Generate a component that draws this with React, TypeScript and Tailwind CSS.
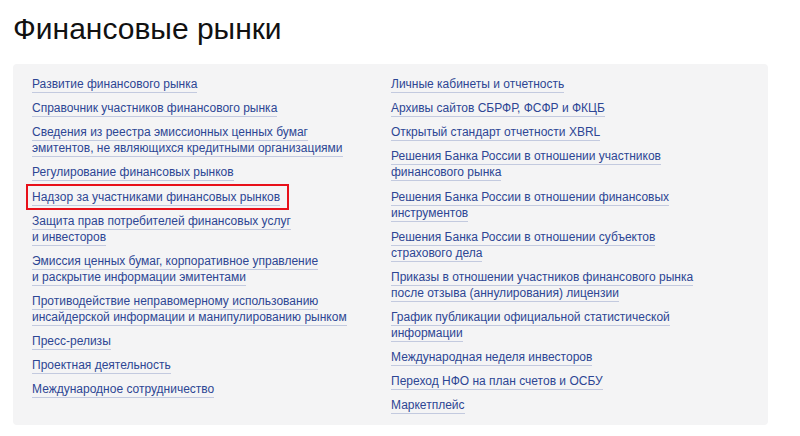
const leftLinks: string[][] = [
  ["Развитие финансового рынка"],
  ["Справочник участников финансового рынка"],
  ["Сведения из реестра эмиссионных ценных бумаг", "эмитентов, не являющихся кредитными организациями"],
  ["Регулирование финансовых рынков"],
  ["Надзор за участниками финансовых рынков"],
  ["Защита прав потребителей финансовых услуг", "и инвесторов"],
  ["Эмиссия ценных бумаг, корпоративное управление", "и раскрытие информации эмитентами"],
  ["Противодействие неправомерному использованию", "инсайдерской информации и манипулированию рынком"],
  ["Пресс-релизы"],
  ["Проектная деятельность"],
  ["Международное сотрудничество"],
];

const rightLinks: string[][] = [
  ["Личные кабинеты и отчетность"],
  ["Архивы сайтов СБРФР, ФСФР и ФКЦБ"],
  ["Открытый стандарт отчетности XBRL"],
  ["Решения Банка России в отношении участников", "финансового рынка"],
  ["Решения Банка России в отношении финансовых", "инструментов"],
  ["Решения Банка России в отношении субъектов", "страхового дела"],
  ["Приказы в отношении участников финансового рынка", "после отзыва (аннулирования) лицензии"],
  ["График публикации официальной статистической", "информации"],
  ["Международная неделя инвесторов"],
  ["Переход НФО на план счетов и ОСБУ"],
  ["Маркетплейс"],
];

const LinkItem = ({ lines, marked }: { lines: string[]; marked?: boolean }) => (
  <li className="relative">
    <a href="#" className="text-[#2d4694] no-underline">
      {lines.map((line, i) => (
        <span key={i}>
          <span className="border-b border-[#c3cadf] pb-[1px]">{line}</span>
          {i < lines.length - 1 && <br />}
        </span>
      ))}
    </a>
    {marked && (
      <span className="absolute left-[-6px] top-[-5px] w-[263px] h-[26px] border-2 border-[#e8101a]" />
    )}
  </li>
);

export default function App() {
  return (
    <div className="w-[800px] h-[436px] bg-white font-['Liberation_Sans',Arial,sans-serif] overflow-hidden">
      <h1 className="pl-[13px] pt-[11px] text-[30px] leading-[36px] text-[#111] font-normal">
        Финансовые рынки
      </h1>
      <div className="mt-[17px] ml-[13px] w-[755px] bg-[#f4f4f5] rounded-[4px] pl-[19px] pt-[12px] pb-[12px] grid grid-cols-[359px_1fr]">
        <ul className="flex flex-col gap-[8.15px] text-[12px] leading-[16px]">
          {leftLinks.map((l, i) => (
            <LinkItem key={i} lines={l} marked={i === 4} />
          ))}
        </ul>
        <ul className="flex flex-col gap-[8.15px] text-[12px] leading-[16px]">
          {rightLinks.map((l, i) => (
            <LinkItem key={i} lines={l} />
          ))}
        </ul>
      </div>
    </div>
  );
}
